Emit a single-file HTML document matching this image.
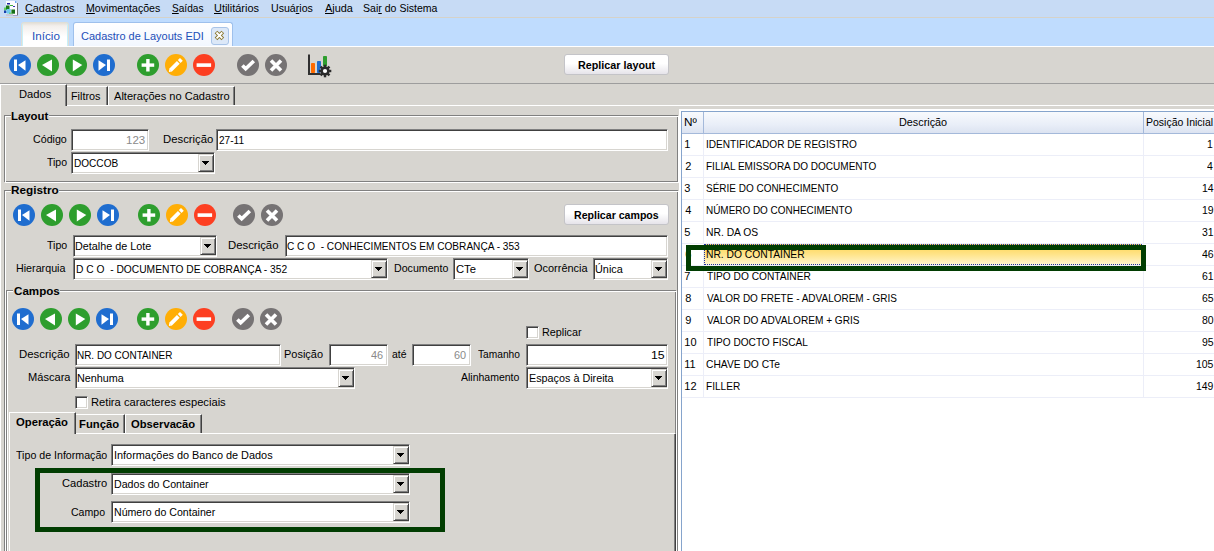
<!DOCTYPE html>
<html><head><meta charset="utf-8">
<style>
*{box-sizing:border-box}
html,body{margin:0;padding:0}
body{width:1214px;height:551px;overflow:hidden;position:relative;background:#d7d5d0;font-family:"Liberation Sans",sans-serif;font-size:11px;color:#000}
.a{position:absolute}
.t{position:absolute;white-space:nowrap;line-height:13px;font-size:11px;transform-origin:0 0}
.b{font-weight:bold}
.r{text-align:right}
/* sunken input */
.in{position:absolute;background:#fff;border:1px solid;border-color:#808080 #fff #fff #808080;box-shadow:inset 1px 1px 0 #404040,inset -1px -1px 0 #d7d5d0}
.in span{position:absolute;white-space:nowrap;line-height:13px;font-size:11px}
/* dropdown button */
.dd{position:absolute;top:1px;right:0;bottom:1px;width:16px;background:#d7d5d0;border:1px solid;border-color:#d7d5d0 #404040 #404040 #d7d5d0;box-shadow:inset 1px 1px 0 #fff,inset -1px -1px 0 #808080}
.dd:after{content:"";position:absolute;left:2px;top:5px;width:1px;height:1px;background:transparent;box-shadow:1px 1px #000,2px 1px #000,3px 1px #000,4px 1px #000,5px 1px #000,6px 1px #000,7px 1px #000,2px 2px #000,3px 2px #000,4px 2px #000,5px 2px #000,6px 2px #000,3px 3px #000,4px 3px #000,5px 3px #000,4px 4px #000}
.ic{position:absolute;width:22px;height:22px}
.chk{position:absolute;width:13px;height:13px;background:#fff;border:1px solid;border-color:#808080 #fff #fff #808080;box-shadow:inset 1px 1px 0 #404040,inset -1px -1px 0 #d7d5d0}
</style></head><body>
<svg width="0" height="0" style="position:absolute">
<defs>
<symbol id="first" viewBox="0 0 22 22"><circle cx="11" cy="11" r="11" fill="#1f6dcf"/><rect x="5" y="5.5" width="3" height="11.5" fill="#fff"/><path d="M9 11 L16.5 6.3 L16.5 16.7Z" fill="#fff"/></symbol>
<symbol id="prev" viewBox="0 0 22 22"><circle cx="11" cy="11" r="11" fill="#2e9e2e"/><path d="M5 11 L15 5.5 L15 17.5Z" fill="#fff"/></symbol>
<symbol id="next" viewBox="0 0 22 22"><circle cx="11" cy="11" r="11" fill="#2e9e2e"/><path d="M17.3 11 L7.8 5.5 L7.8 17.5Z" fill="#fff"/></symbol>
<symbol id="last" viewBox="0 0 22 22"><circle cx="11" cy="11" r="11" fill="#1f6dcf"/><rect x="14" y="5.5" width="3" height="11.5" fill="#fff"/><path d="M13 11 L5.5 6.3 L5.5 16.7Z" fill="#fff"/></symbol>
<symbol id="plus" viewBox="0 0 22 22"><circle cx="11" cy="11" r="11" fill="#2e9e2e"/><rect x="4.6" y="9.4" width="12.6" height="3.4" fill="#fff"/><rect x="9.2" y="5" width="3.4" height="12.5" fill="#fff"/></symbol>
<symbol id="edit" viewBox="0 0 22 22"><circle cx="11" cy="11" r="11" fill="#ffae06"/><path d="M5.3 16.4 L13.3 8.4" stroke="#fff" stroke-width="3.9"/><path d="M14.2 7.5 L16.4 5.3" stroke="#fff" stroke-width="3.9"/><path d="M3.9 17.9 L4.2 15.2 L6.7 17.6Z" fill="#fff"/></symbol>
<symbol id="minus" viewBox="0 0 22 22"><circle cx="11" cy="11" r="11" fill="#fd3f21"/><rect x="3.6" y="9.3" width="14.5" height="3.6" fill="#fff"/></symbol>
<symbol id="ok" viewBox="0 0 22 22"><circle cx="11" cy="11" r="11" fill="#767374"/><path d="M5.4 11.4 L8.7 14.8 L16.8 7" stroke="#fff" stroke-width="3.6" fill="none"/></symbol>
<symbol id="cancel" viewBox="0 0 22 22"><circle cx="11" cy="11" r="11" fill="#767374"/><path d="M6 6.4 L16 16.4 M16 6.4 L6 16.4" stroke="#fff" stroke-width="3.6" fill="none"/></symbol>
</defs></svg>

<div class="a" style="left:0;top:0;width:1214px;height:17px;background:#c7dbf5"></div>
<div class="a" style="left:0;top:17px;width:1214px;height:1px;background:#d6d2c8"></div>
<div class="a" style="left:0;top:18px;width:1214px;height:28px;background:#bfdcfe"></div>
<div class="a" style="left:0;top:46px;width:1214px;height:1px;background:#fff"></div>
<div class="a" style="left:0;top:47px;width:1214px;height:36px;background:#d7d5d0"></div>
<div class="a" style="left:0;top:83px;width:1214px;height:1px;background:#9d9d9d"></div>
<svg class="a" style="left:0;top:0" width="20" height="18" viewBox="0 0 20 18">
<rect x="6" y="1" width="11" height="14.5" fill="#fbfbff"/>
<rect x="17" y="3" width="1" height="13" fill="#707070"/>
<rect x="10" y="15" width="8" height="1" fill="#a8a0c8"/>
<rect x="15" y="1" width="1.5" height="2" fill="#6aa8f0"/>
<rect x="7" y="3" width="3" height="1.5" fill="#2020a0"/>
<rect x="7" y="6" width="2" height="1" fill="#3030b0"/>
<rect x="13" y="6" width="2" height="1" fill="#3030b0"/>
<rect x="10" y="5" width="3" height="1" fill="#40b040"/>
<rect x="6" y="5.5" width="3.5" height="4.5" fill="#1a7a1a"/>
<rect x="4" y="7.5" width="2" height="3" fill="#60d060"/>
<rect x="4" y="10.5" width="2.5" height="2.5" fill="#1840b0"/>
<rect x="6.5" y="9" width="4.3" height="4.7" fill="#70c8f0"/>
<rect x="11.4" y="9.5" width="3.6" height="4.2" fill="#187018"/>
<rect x="9" y="12.7" width="2.8" height="1" fill="#50d050"/>
<rect x="6" y="14" width="7" height="2" fill="#c8c8d8"/>
</svg>
<div class="t" style="left:24.61px;top:2px;transform:scaleX(0.9857);"><u>C</u>adastros</div>
<div class="t" style="left:85.74px;top:2px;transform:scaleX(0.9645);"><u>M</u>ovimentações</div>
<div class="t" style="left:171.78px;top:2px;transform:scaleX(0.9182);"><u>S</u>aídas</div>
<div class="t" style="left:214.41px;top:2px;transform:scaleX(0.9932);"><u>U</u>tilitários</div>
<div class="t" style="left:270.74px;top:2px;transform:scaleX(0.9643);">Usuá<u>r</u>ios</div>
<div class="t" style="left:324.60px;top:2px;transform:scaleX(0.9929);"><u>A</u>juda</div>
<div class="t" style="left:363.34px;top:2px;transform:scaleX(0.9592);">Sai<u>r</u> do Sistema</div>
<div class="a" style="left:21px;top:22px;width:48px;height:24px;border:1px solid #e0ded6;border-bottom:none;border-radius:3px 3px 0 0;background:linear-gradient(#e4dfd8 0,#f3efec 3px,#fff 14px,#fff);box-shadow:inset 1px 0 0 #c8f0f8,inset -1px 0 0 #c8f0f8"></div>
<div class="a" style="left:73px;top:22px;width:160px;height:24px;border:1px solid #9ec0ec;border-bottom:none;border-radius:3px 3px 0 0;background:linear-gradient(#fff,#f2f7ff)"></div>
<div class="a" style="left:211px;top:27px;width:18px;height:18px;border:1px solid #a9c4e8;border-radius:3px;background:#dce8f8"></div>
<svg class="a" style="left:214px;top:30px" width="12" height="12" viewBox="0 0 12 12"><path d="M2 2 L8.8 8.8 M8.8 2 L2 8.8" stroke="#8a7830" stroke-width="3.8"/><path d="M2.5 2.5 L8.3 8.3 M8.3 2.5 L2.5 8.3" stroke="#fff" stroke-width="1.9"/></svg>
<div class="t" style="left:31.64px;top:30px;color:#1d4fb8;transform:scaleX(1.0600);">Início</div>
<div class="t" style="left:81.00px;top:30px;color:#1d4fb8;transform:scaleX(0.9983);">Cadastro de Layouts EDI</div>
<svg class="ic" style="left:9px;top:53.5px"><use href="#first"/></svg>
<svg class="ic" style="left:37px;top:53.5px"><use href="#prev"/></svg>
<svg class="ic" style="left:65px;top:53.5px"><use href="#next"/></svg>
<svg class="ic" style="left:93px;top:53.5px"><use href="#last"/></svg>
<svg class="ic" style="left:137px;top:53.5px"><use href="#plus"/></svg>
<svg class="ic" style="left:165px;top:53.5px"><use href="#edit"/></svg>
<svg class="ic" style="left:193px;top:53.5px"><use href="#minus"/></svg>
<svg class="ic" style="left:237px;top:53.5px"><use href="#ok"/></svg>
<svg class="ic" style="left:265px;top:53.5px"><use href="#cancel"/></svg>
<svg class="a" style="left:306px;top:52px" width="28" height="28" viewBox="0 0 28 28">
<rect x="5" y="11" width="4" height="10" rx="0.8" fill="#ff6a00"/>
<rect x="11" y="9" width="4" height="12" rx="0.8" fill="#1f6dcf"/>
<rect x="17" y="4" width="4" height="11" rx="0.8" fill="#2e9e2e"/>
<path d="M3 2.5 V22 H15" stroke="#303030" stroke-width="2" fill="none"/>
<g transform="translate(19 19)"><circle r="5.3" fill="#d7d5d0" opacity="0.7"/><circle r="4.6" fill="#2b2b2b"/><rect x="-1.2" y="-6.3" width="2.4" height="3" fill="#2b2b2b" transform="rotate(0)"/><rect x="-1.2" y="-6.3" width="2.4" height="3" fill="#2b2b2b" transform="rotate(45)"/><rect x="-1.2" y="-6.3" width="2.4" height="3" fill="#2b2b2b" transform="rotate(90)"/><rect x="-1.2" y="-6.3" width="2.4" height="3" fill="#2b2b2b" transform="rotate(135)"/><rect x="-1.2" y="-6.3" width="2.4" height="3" fill="#2b2b2b" transform="rotate(180)"/><rect x="-1.2" y="-6.3" width="2.4" height="3" fill="#2b2b2b" transform="rotate(225)"/><rect x="-1.2" y="-6.3" width="2.4" height="3" fill="#2b2b2b" transform="rotate(270)"/><rect x="-1.2" y="-6.3" width="2.4" height="3" fill="#2b2b2b" transform="rotate(315)"/><circle r="2.1" fill="#fff"/></g>
</svg>
<div class="a" style="left:564px;top:54px;width:105px;height:21px;border:1px solid #c4c4c8;border-radius:3px;background:linear-gradient(#fff 0,#fff 45%,#e6e4ea 100%)"></div>
<div class="t" style="left:577.72px;top:59px;font-weight:bold;transform:scaleX(0.9782);">Replicar layout</div>
<div class="a" style="left:0;top:105px;width:1214px;height:1px;background:#fff"></div>
<div class="a" style="left:0;top:105px;width:1px;height:446px;background:#fff"></div>
<div class="a" style="left:67px;top:86px;width:41px;height:19px;border-top:1px solid #fff;border-right:1px solid #404040;box-shadow:inset -1px 0 0 #808080"></div>
<div class="a" style="left:108px;top:86px;width:127px;height:19px;border-top:1px solid #fff;border-left:1px solid #fff;border-right:1px solid #404040;box-shadow:inset -1px 0 0 #808080"></div>
<div class="a" style="left:0px;top:84px;width:67px;height:22px;background:#d7d5d0;border-top:1px solid #fff;border-left:1px solid #fff;border-right:1px solid #404040;box-shadow:inset -1px 0 0 #808080"></div>
<div class="t" style="left:18.59px;top:88px;transform:scaleX(1.0133);">Dados</div>
<div class="t" style="left:70.52px;top:90px;transform:scaleX(0.9828);">Filtros</div>
<div class="t" style="left:114.00px;top:90px;transform:scaleX(1.0053);">Alterações no Cadastro</div>
<div class="a" style="left:4px;top:115px;width:674px;height:67px;border:1px solid #808080"></div><div class="a" style="left:5px;top:116px;width:674px;height:67px;border:1px solid #fff"></div>
<div class="a" style="left:11px;top:112px;width:38px;height:8px;background:#d7d5d0"></div>
<div class="t" style="left:10.77px;top:110px;font-weight:bold;transform:scaleX(1.0343);">Layout</div>
<div class="t" style="left:32.93px;top:133px;transform:scaleX(0.9697);">Código</div>
<div class="in" style="left:71px;top:129px;width:78px;height:22px"></div>
<div class="t" style="left:125.55px;top:134px;color:#8a8a8a;transform:scaleX(1.0471);">123</div>
<div class="t" style="left:162.57px;top:133px;transform:scaleX(1.0298);">Descrição</div>
<div class="in" style="left:216px;top:129px;width:452px;height:22px"></div>
<div class="t" style="left:219.00px;top:134px;transform:scaleX(0.9148);">27-11</div>
<div class="t" style="left:47.30px;top:156px;transform:scaleX(0.9550);">Tipo</div>
<div class="in" style="left:71px;top:152px;width:144px;height:22px"><div class="dd"></div></div>
<div class="t" style="left:74.09px;top:157px;transform:scaleX(0.9149);">DOCCOB</div>
<div class="a" style="left:4px;top:190px;width:674px;height:410px;border:1px solid #808080"></div><div class="a" style="left:5px;top:191px;width:674px;height:410px;border:1px solid #fff"></div>
<div class="a" style="left:11px;top:186px;width:48px;height:8px;background:#d7d5d0"></div>
<div class="t" style="left:10.68px;top:184px;font-weight:bold;transform:scaleX(1.0686);">Registro</div>
<svg class="ic" style="left:13px;top:203.7px"><use href="#first"/></svg>
<svg class="ic" style="left:41px;top:203.7px"><use href="#prev"/></svg>
<svg class="ic" style="left:69px;top:203.7px"><use href="#next"/></svg>
<svg class="ic" style="left:97px;top:203.7px"><use href="#last"/></svg>
<svg class="ic" style="left:138px;top:203.7px"><use href="#plus"/></svg>
<svg class="ic" style="left:166px;top:203.7px"><use href="#edit"/></svg>
<svg class="ic" style="left:194px;top:203.7px"><use href="#minus"/></svg>
<svg class="ic" style="left:233px;top:203.7px"><use href="#ok"/></svg>
<svg class="ic" style="left:261px;top:203.7px"><use href="#cancel"/></svg>
<div class="a" style="left:564px;top:204px;width:105px;height:21px;border:1px solid #c4c4c8;border-radius:3px;background:linear-gradient(#fff 0,#fff 45%,#e6e4ea 100%)"></div>
<div class="t" style="left:573.64px;top:209px;font-weight:bold;transform:scaleX(0.9621);">Replicar campos</div>
<div class="t" style="left:47.00px;top:239px;transform:scaleX(0.9650);">Tipo</div>
<div class="in" style="left:73px;top:235px;width:144px;height:22px"><div class="dd"></div></div>
<div class="t" style="left:75.42px;top:240px;transform:scaleX(0.9816);">Detalhe de Lote</div>
<div class="t" style="left:228.47px;top:239px;transform:scaleX(1.0319);">Descrição</div>
<div class="in" style="left:285px;top:235px;width:383px;height:22px"></div>
<div class="t" style="left:286.78px;top:240px;transform:scaleX(0.9182);">C C O &nbsp;- CONHECIMENTOS EM COBRANÇA - 353</div>
<div class="t" style="left:15.73px;top:262px;transform:scaleX(0.9740);">Hierarquia</div>
<div class="in" style="left:73px;top:258px;width:315px;height:22px"><div class="dd"></div></div>
<div class="t" style="left:75.77px;top:263px;transform:scaleX(0.9319);">D C O &nbsp;- DOCUMENTO DE COBRANÇA - 352</div>
<div class="t" style="left:393.83px;top:262px;transform:scaleX(0.9655);">Documento</div>
<div class="in" style="left:453px;top:258px;width:76px;height:22px"><div class="dd"></div></div>
<div class="t" style="left:455.78px;top:263px;transform:scaleX(1.0222);">CTe</div>
<div class="t" style="left:533.50px;top:262px;transform:scaleX(0.9963);">Ocorrência</div>
<div class="in" style="left:593px;top:258px;width:75px;height:22px"><div class="dd"></div></div>
<div class="t" style="left:595.21px;top:263px;transform:scaleX(0.9889);">Única</div>
<div class="a" style="left:6px;top:290px;width:670px;height:310px;border:1px solid #808080"></div><div class="a" style="left:7px;top:291px;width:670px;height:310px;border:1px solid #fff"></div>
<div class="a" style="left:13px;top:287px;width:47px;height:8px;background:#d7d5d0"></div>
<div class="t" style="left:13.90px;top:285px;font-weight:bold;transform:scaleX(1.0558);">Campos</div>
<svg class="ic" style="left:12px;top:308px"><use href="#first"/></svg>
<svg class="ic" style="left:40px;top:308px"><use href="#prev"/></svg>
<svg class="ic" style="left:68px;top:308px"><use href="#next"/></svg>
<svg class="ic" style="left:96px;top:308px"><use href="#last"/></svg>
<svg class="ic" style="left:137px;top:308px"><use href="#plus"/></svg>
<svg class="ic" style="left:165px;top:308px"><use href="#edit"/></svg>
<svg class="ic" style="left:193px;top:308px"><use href="#minus"/></svg>
<svg class="ic" style="left:232px;top:308px"><use href="#ok"/></svg>
<svg class="ic" style="left:260px;top:308px"><use href="#cancel"/></svg>
<div class="chk" style="left:526px;top:326px"></div>
<div class="t" style="left:542.42px;top:326px;transform:scaleX(0.9821);">Replicar</div>
<div class="t" style="left:19.46px;top:348px;transform:scaleX(1.0362);">Descrição</div>
<div class="in" style="left:75px;top:344px;width:206px;height:22px"></div>
<div class="t" style="left:77.10px;top:349px;transform:scaleX(0.9038);">NR. DO CONTAINER</div>
<div class="t" style="left:284.30px;top:348px;transform:scaleX(0.9974);">Posição</div>
<div class="in" style="left:329px;top:344px;width:59px;height:22px"></div>
<div class="t" style="left:371.20px;top:349px;color:#8a8a8a;transform:scaleX(0.9917);">46</div>
<div class="t" style="left:392.00px;top:348px;transform:scaleX(0.9467);">até</div>
<div class="in" style="left:412px;top:344px;width:59px;height:22px"></div>
<div class="t" style="left:454.20px;top:349px;color:#8a8a8a;transform:scaleX(0.9917);">60</div>
<div class="t" style="left:477.50px;top:348px;transform:scaleX(0.9267);">Tamanho</div>
<div class="in" style="left:526px;top:344px;width:142px;height:22px"></div>
<div class="t" style="left:651.28px;top:349px;transform:scaleX(1.1182);">15</div>
<div class="t" style="left:27.79px;top:371px;transform:scaleX(1.0073);">Máscara</div>
<div class="in" style="left:75px;top:367px;width:280px;height:22px"><div class="dd"></div></div>
<div class="t" style="left:77.02px;top:372px;transform:scaleX(0.9826);">Nenhuma</div>
<div class="t" style="left:461.00px;top:371px;transform:scaleX(0.9541);">Alinhamento</div>
<div class="in" style="left:526px;top:367px;width:142px;height:22px"><div class="dd"></div></div>
<div class="t" style="left:528.62px;top:372px;transform:scaleX(0.9812);">Espaços à Direita</div>
<div class="chk" style="left:75px;top:396px"></div>
<div class="t" style="left:91.48px;top:396px;transform:scaleX(1.0153);">Retira caracteres especiais</div>
<div class="a" style="left:9px;top:433px;width:667px;height:130px;border-top:1px solid #fff;border-left:1px solid #fff;border-right:1px solid #404040;box-shadow:inset -1px 0 0 #808080"></div>
<div class="a" style="left:75px;top:414px;width:50px;height:19px;border-top:1px solid #fff;border-right:1px solid #404040;box-shadow:inset -1px 0 0 #808080"></div>
<div class="a" style="left:125px;top:414px;width:77px;height:19px;border-top:1px solid #fff;border-left:1px solid #fff;border-right:1px solid #404040;box-shadow:inset -1px 0 0 #808080"></div>
<div class="a" style="left:9px;top:412px;width:67px;height:22px;background:#d7d5d0;border-top:1px solid #fff;border-left:1px solid #fff;border-right:1px solid #404040;box-shadow:inset -1px 0 0 #808080"></div>
<div class="t" style="left:15.90px;top:416px;font-weight:bold;transform:scaleX(1.0240);">Operação</div>
<div class="t" style="left:78.58px;top:418px;font-weight:bold;transform:scaleX(1.0237);">Função</div>
<div class="t" style="left:131.00px;top:418px;font-weight:bold;transform:scaleX(1.0190);">Observacão</div>
<div class="t" style="left:16.10px;top:449px;transform:scaleX(0.9670);">Tipo de Informação</div>
<div class="in" style="left:111px;top:444px;width:299px;height:22px"><div class="dd"></div></div>
<div class="t" style="left:113.61px;top:449px;transform:scaleX(0.9899);">Informações do Banco de Dados</div>
<div class="in" style="left:111px;top:473px;width:299px;height:22px"><div class="dd"></div></div>
<div class="t" style="left:62.49px;top:477px;transform:scaleX(1.0116);">Cadastro</div>
<div class="t" style="left:113.63px;top:478px;transform:scaleX(0.9670);">Dados do Container</div>
<div class="in" style="left:111px;top:501px;width:299px;height:22px"><div class="dd"></div></div>
<div class="t" style="left:70.64px;top:506px;transform:scaleX(0.9588);">Campo</div>
<div class="t" style="left:113.64px;top:506px;transform:scaleX(0.9625);">Número do Container</div>
<div class="a" style="left:35px;top:468px;width:410px;height:64px;border:5px solid #013d01"></div>
<div class="a" style="left:679px;top:109px;width:600px;height:500px;background:#fff"></div>
<div class="a" style="left:681px;top:111px;width:600px;height:500px;border-left:1px solid #86a4cc;border-top:1px solid #86a4cc"></div>
<div class="a" style="left:682px;top:112px;width:540px;height:21px;background:linear-gradient(#f8fafd,#e9eef8 60%,#dce3f1)"></div>
<div class="a" style="left:682px;top:133px;width:540px;height:1px;background:#a4b9da"></div>
<div class="a" style="left:703px;top:112px;width:1px;height:21px;background:#a4b9da"></div>
<div class="a" style="left:1143px;top:112px;width:1px;height:21px;background:#a4b9da"></div>
<div class="t" style="left:683.53px;top:116px;transform:scaleX(1.0727);">Nº</div>
<div class="t" style="left:899.02px;top:116px;transform:scaleX(0.9830);">Descrição</div>
<div class="t" style="left:1145.55px;top:116px;transform:scaleX(0.9536);">Posição Inicial</div>
<div class="a" style="left:703px;top:134px;width:1px;height:264px;background:#eceef8"></div>
<div class="a" style="left:1143px;top:134px;width:1px;height:264px;background:#eceef8"></div>
<div class="a" style="left:682px;top:155px;width:540px;height:1px;background:#eceef8"></div>
<div class="t" style="left:684.30px;top:138px;transform:scaleX(1.0000);">1</div>
<div class="t" style="left:705.78px;top:138px;transform:scaleX(0.9172);">IDENTIFICADOR DE REGISTRO</div>
<div class="t" style="left:1207.30px;top:138px;transform:scaleX(0.9500);">1</div>
<div class="a" style="left:682px;top:177px;width:540px;height:1px;background:#eceef8"></div>
<div class="t" style="left:685.30px;top:160px;transform:scaleX(1.0000);">2</div>
<div class="t" style="left:705.79px;top:160px;transform:scaleX(0.9107);">FILIAL EMISSORA DO DOCUMENTO</div>
<div class="t" style="left:1207.30px;top:160px;transform:scaleX(0.9500);">4</div>
<div class="a" style="left:682px;top:199px;width:540px;height:1px;background:#eceef8"></div>
<div class="t" style="left:684.30px;top:182px;transform:scaleX(1.0000);">3</div>
<div class="t" style="left:705.79px;top:182px;transform:scaleX(0.9069);">SÉRIE DO CONHECIMENTO</div>
<div class="t" style="left:1201.60px;top:182px;transform:scaleX(0.9500);">14</div>
<div class="a" style="left:682px;top:221px;width:540px;height:1px;background:#eceef8"></div>
<div class="t" style="left:685.30px;top:204px;transform:scaleX(1.0000);">4</div>
<div class="t" style="left:705.80px;top:204px;transform:scaleX(0.9037);">NÚMERO DO CONHECIMENTO</div>
<div class="t" style="left:1201.60px;top:204px;transform:scaleX(0.9500);">19</div>
<div class="a" style="left:682px;top:243px;width:540px;height:1px;background:#eceef8"></div>
<div class="t" style="left:684.30px;top:226px;transform:scaleX(1.0000);">5</div>
<div class="t" style="left:705.76px;top:226px;transform:scaleX(0.9382);">NR. DA OS</div>
<div class="t" style="left:1201.60px;top:226px;transform:scaleX(0.9500);">31</div>
<div class="a" style="left:682px;top:265px;width:540px;height:1px;background:#eceef8"></div>
<div class="a" style="left:704px;top:244px;width:438px;height:21px;background:linear-gradient(#ffd44e,#ffe48a 50%,#fff6d0);outline:1px dotted #2030a0;outline-offset:-1px"></div>
<div class="t" style="left:685.30px;top:248px;transform:scaleX(1.0000);">6</div>
<div class="t" style="left:705.77px;top:248px;transform:scaleX(0.9346);">NR. DO CONTAINER</div>
<div class="t" style="left:1201.60px;top:248px;transform:scaleX(0.9500);">46</div>
<div class="a" style="left:682px;top:287px;width:540px;height:1px;background:#eceef8"></div>
<div class="t" style="left:684.30px;top:270px;transform:scaleX(1.0000);">7</div>
<div class="t" style="left:706.70px;top:270px;transform:scaleX(0.9252);">TIPO DO CONTAINER</div>
<div class="t" style="left:1201.60px;top:270px;transform:scaleX(0.9500);">61</div>
<div class="a" style="left:682px;top:309px;width:540px;height:1px;background:#eceef8"></div>
<div class="t" style="left:685.30px;top:292px;transform:scaleX(1.0000);">8</div>
<div class="t" style="left:706.70px;top:292px;transform:scaleX(0.9077);">VALOR DO FRETE - ADVALOREM - GRIS</div>
<div class="t" style="left:1201.60px;top:292px;transform:scaleX(0.9500);">65</div>
<div class="a" style="left:682px;top:331px;width:540px;height:1px;background:#eceef8"></div>
<div class="t" style="left:685.30px;top:314px;transform:scaleX(1.0000);">9</div>
<div class="t" style="left:706.70px;top:314px;transform:scaleX(0.9181);">VALOR DO ADVALOREM + GRIS</div>
<div class="t" style="left:1201.60px;top:314px;transform:scaleX(0.9500);">80</div>
<div class="a" style="left:682px;top:353px;width:540px;height:1px;background:#eceef8"></div>
<div class="t" style="left:684.30px;top:336px;transform:scaleX(1.0000);">10</div>
<div class="t" style="left:706.70px;top:336px;transform:scaleX(0.9193);">TIPO DOCTO FISCAL</div>
<div class="t" style="left:1201.60px;top:336px;transform:scaleX(0.9500);">95</div>
<div class="a" style="left:682px;top:375px;width:540px;height:1px;background:#eceef8"></div>
<div class="t" style="left:684.30px;top:358px;transform:scaleX(1.0000);">11</div>
<div class="t" style="left:705.77px;top:358px;transform:scaleX(0.9321);">CHAVE DO CTe</div>
<div class="t" style="left:1195.90px;top:358px;transform:scaleX(0.9500);">105</div>
<div class="a" style="left:682px;top:397px;width:540px;height:1px;background:#eceef8"></div>
<div class="t" style="left:684.30px;top:380px;transform:scaleX(1.0000);">12</div>
<div class="t" style="left:705.78px;top:380px;transform:scaleX(0.9171);">FILLER</div>
<div class="t" style="left:1195.90px;top:380px;transform:scaleX(0.9500);">149</div>
<div class="a" style="left:686px;top:245px;width:460px;height:26px;border:5px solid #013d01"></div>
</body></html>
